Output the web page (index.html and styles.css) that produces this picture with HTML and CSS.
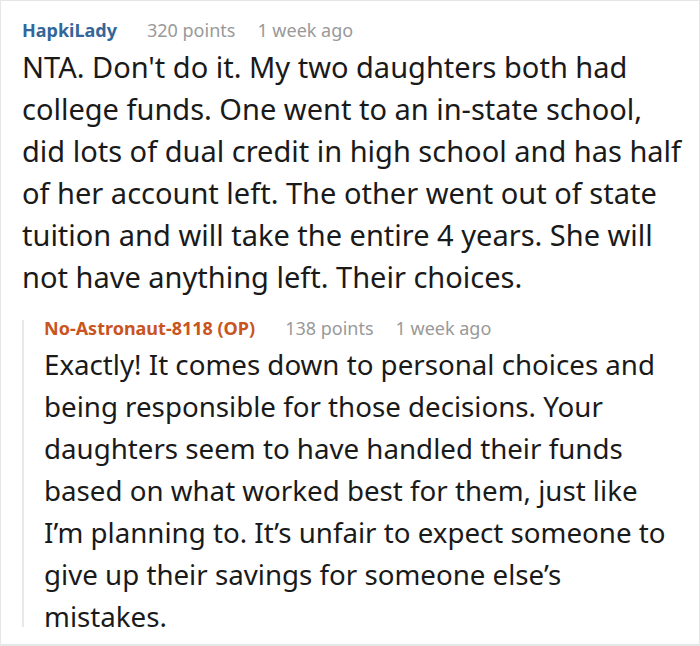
FILE: index.html
```html
<!DOCTYPE html>
<html>
<head>
<meta charset="utf-8">
<link rel="stylesheet" href="styles.css">
</head>
<body>
<div class="frame">
  <div class="comment">
    <div class="meta">
      <span class="author">HapkiLady</span>
      <span class="points">320 points</span>
      <span class="time">1 week ago</span>
    </div>
    <p class="text">NTA. Don't do it. My two daughters both had college funds. One went to an in-state school, did lots of dual credit in high school and has half of her account left. The other went out of state tuition and will take the entire 4 years. She will not have anything left. Their choices.</p>
    <div class="reply">
      <div class="meta">
        <span class="author op">No-Astronaut-8118 (OP)</span>
        <span class="points">138 points</span>
        <span class="time">1 week ago</span>
      </div>
      <p class="text">Exactly! It comes down to personal choices and being responsible for those decisions. Your daughters seem to have handled their funds based on what worked best for them, just like I’m planning to. It’s unfair to expect someone to give up their savings for someone else’s mistakes.</p>
    </div>
  </div>
</div>
</body>
</html>
```
FILE: styles.css
```css
html, body {
  margin: 0;
  padding: 0;
  background: #fff;
}
.frame {
  box-sizing: border-box;
  width: 700px;
  height: 646px;
  border: 1px solid #e6e6e6;
  border-bottom-width: 2px;
  overflow: hidden;
  font-family: "Noto Sans", "Open Sans", sans-serif;
  color: #1a1a1a;
}
.comment {
  padding: 19px 12px 0 21px;
}
.meta {
  display: flex;
  align-items: baseline;
  font-size: 18px;
  line-height: 20px;
  white-space: nowrap;
}
.author {
  font-weight: bold;
  color: #336699;
  margin-right: 30px;
}
.author.op {
  color: #c9541d;
}
.points {
  color: #999;
  margin-right: 22px;
}
.time {
  color: #999;
}
.text {
  margin: 6px 0 0;
  font-size: 29px;
  line-height: 42px;
}
.reply {
  position: relative;
  margin-top: 20px;
  margin-right: 14px;
  padding-left: 22px;
}
.reply::before {
  content: "";
  position: absolute;
  left: 0;
  top: 2px;
  bottom: 10px;
  width: 2px;
  background: #e8e8e8;
}
.reply .text {
  margin-top: 5px;
  font-size: 27.7px;
}
```
